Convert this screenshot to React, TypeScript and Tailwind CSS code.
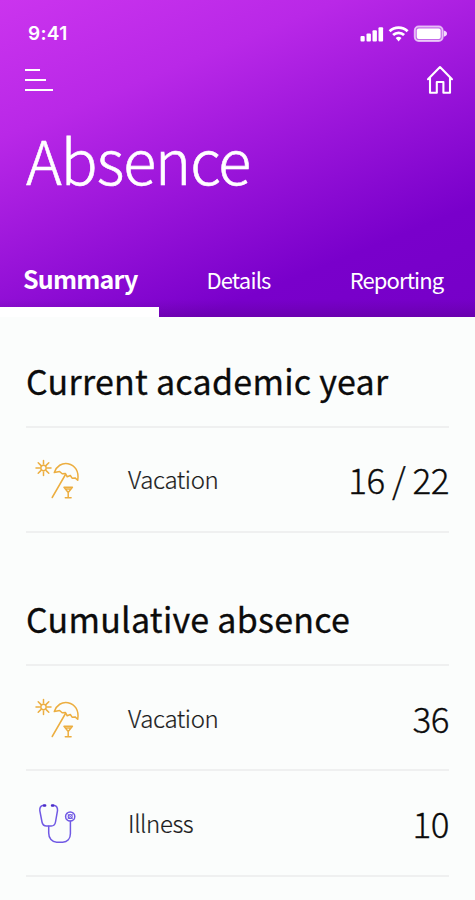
import type { ReactNode } from "react";

interface AbsenceRow {
  label: string;
  value: string;
  icon: ReactNode;
}

interface AbsenceSectionProps {
  title: string;
  rows: AbsenceRow[];
}

function StatusIcons() {
  return (
    <svg width="88" height="18" viewBox="0 0 88 18" fill="#fff">
      <rect x="0.5" y="11" width="4.2" height="5.5" rx="1" />
      <rect x="6.5" y="8.4" width="4.4" height="8.1" rx="1" />
      <rect x="12.5" y="5.3" width="4.4" height="11.2" rx="1" />
      <rect x="18.5" y="2.2" width="4.6" height="14.3" rx="1" />
      <g fill="none" stroke="#fff" strokeWidth="2.8">
        <path d="M29.6 6.2a13 13 0 0 1 18 0" />
        <path d="M33.1 10a8 8 0 0 1 11 0" />
      </g>
      <path d="M38.6 16.5l-2.9-3.4a4.2 4.2 0 0 1 5.8 0z" />
      <rect x="54.7" y="1.4" width="28" height="14.6" rx="4" fill="#fff" fillOpacity="0.35" stroke="#fff" strokeOpacity="0.65" strokeWidth="1.8" />
      <rect x="56.8" y="3.4" width="23.8" height="10.6" rx="2" />
      <path d="M83.8 5.6q3.2 1 3.2 3.1t-3.2 3.1z" fillOpacity="0.85" />
    </svg>
  );
}

function HomeIcon() {
  return (
    <svg width="28" height="30" viewBox="0 0 28 30" fill="none" stroke="#fff" strokeWidth="2.1" strokeLinejoin="round" strokeLinecap="round">
      <path d="M4 13L2 14.2 14 2l12 12.2-2-1.2v14.7h-6.6V17h-6.6v10.7H4z" />
    </svg>
  );
}

function VacationIcon() {
  return (
    <svg width="46" height="42" viewBox="0 0 46 42" fill="none" stroke="#ecae40" strokeWidth="1.5" strokeLinecap="round" strokeLinejoin="round">
      <circle cx="9.5" cy="10" r="2.7" />
      <path d="M9.5 2.5v3.6M9.5 13.9v3.6M2 10h3.6M13.4 10H17M4.2 4.7l2.4 2.4M12.4 12.9l2.4 2.4M4.2 15.3l2.4-2.4M12.4 7.1l2.4-2.4" />
      <path d="M20.3 14.5C22.5 8 28 4.6 34 5.7c7 1.2 11.3 7.8 9.7 16.6l-2.6-2.4-3 .3-1.8-2.7-3.1 1.3-1.7-3.3-3.3.3-2.6-2.3z" />
      <path d="M31.5 16.5L18.2 39.5" />
      <path d="M30 29.3h8.4l-4.2 5.2zM31.4 31h5.6M34.2 34.5v5.3M31.3 39.8h5.8" />
    </svg>
  );
}

function IllnessIcon() {
  return (
    <svg width="46" height="42" viewBox="0 -0.7 46 42" fill="none" stroke="#7059e4" strokeWidth="1.5" strokeLinecap="round" strokeLinejoin="round">
      <path d="M10.5 2.8H8.6C6.5 3.5 5.6 5.3 5.8 8L8 19.3c.5 2.4 2 4 4.4 4h4.8c2.4 0 3.9-1.6 4.3-4L23.5 8c.2-2.7-.8-4.5-2.9-5.2h-2" />
      <path d="M10.1 2.8h1M18.1 2.8h1" stroke="#4a2cc8" strokeWidth="2.6" />
      <path d="M14.7 23.5v6.7c0 5.4 3.3 9.3 8 9.3h6c4.7 0 7.7-3.5 7.7-8.6V18.6" />
      <circle cx="36.2" cy="13.8" r="4.6" />
      <circle cx="36.2" cy="13.8" r="2" strokeWidth="1.1" />
      <path d="M33 10.6l6.4 6.4M33 17l6.4-6.4" strokeWidth="0.9" />
    </svg>
  );
}

function AbsenceSection({ title, rows }: AbsenceSectionProps) {
  return (
    <section className="h-[238.5px]">
      <h2 className="flex h-[110.5px] items-end border-b-2 border-[#eff0f0] pb-5 text-[34px] leading-[50px] tracking-[0.25px] text-[#0b0b0b] [-webkit-text-stroke:0.3px_#0b0b0b]">
        {title}
      </h2>
      {rows.map((row) => (
        <div key={row.label} className="flex h-[105.3px] items-center border-b-2 border-[#eff0f0]">
          <div className="w-[102px] pl-2">{row.icon}</div>
          <div className="grow text-[24px] leading-9 font-light tracking-[-0.4px] text-[#1c1c1c] [-webkit-text-stroke:0.2px_#1c1c1c]">{row.label}</div>
          <div className="text-[35px] leading-[50px] font-light tracking-[-0.5px] text-[#0b0b0b] [-webkit-text-stroke:0.3px_#0b0b0b]">{row.value}</div>
        </div>
      ))}
    </section>
  );
}

export default function App() {
  return (
    <div className="h-[900px] w-full overflow-hidden bg-[#fbfdfc] font-['Noto_Sans_CJK_SC',sans-serif]">
      <header className="flex h-[317px] flex-col bg-[linear-gradient(to_top,#50007a55_0px,#50007a22_10px,transparent_18px),linear-gradient(158deg,#cb34ee_0%,#b928e7_27%,#7900cb_78%,#7600c8_100%)] text-white">
        <div className="flex h-[60px] items-center justify-between pt-[7px] pr-[27px] pl-[28px]">
          <span className="pt-0.5 font-['Inter',sans-serif] text-[19px] font-semibold tracking-[0.3px]">9:41</span>
          <StatusIcons />
        </div>
        <div className="flex h-10 items-center justify-between pr-[21px] pl-[25px]">
          <div className="flex flex-col gap-2">
            <div className="h-0.5 w-[15px] bg-white" />
            <div className="h-0.5 w-[21px] bg-white" />
            <div className="h-0.5 w-7 bg-white" />
          </div>
          <HomeIcon />
        </div>
        <h1 className="mt-[17px] h-[129px] pl-[26px] text-[61px] leading-[84px] font-light tracking-[-1px] [-webkit-text-stroke:0.6px_#fff]">Absence</h1>
        <nav className="flex h-[71px]">
          <div className="w-[159px] border-b-[10px] border-white pt-[14px] pl-[23px]">
            <span className="text-[25px] leading-9 font-bold tracking-[-0.8px]">Summary</span>
          </div>
          <div className="w-[159px] pt-[17px] text-center text-[22px] leading-8 tracking-[-0.8px]">Details</div>
          <div className="w-[157px] pt-[17px] text-center text-[22px] leading-8 tracking-[-0.9px]">Reporting</div>
        </nav>
      </header>
      <main className="px-[26px]">
        <AbsenceSection title="Current academic year" rows={[{ label: "Vacation", value: "16 / 22", icon: <VacationIcon /> }]} />
        <AbsenceSection
          title="Cumulative absence"
          rows={[
            { label: "Vacation", value: "36", icon: <VacationIcon /> },
            { label: "Illness", value: "10", icon: <IllnessIcon /> },
          ]}
        />
      </main>
    </div>
  );
}
